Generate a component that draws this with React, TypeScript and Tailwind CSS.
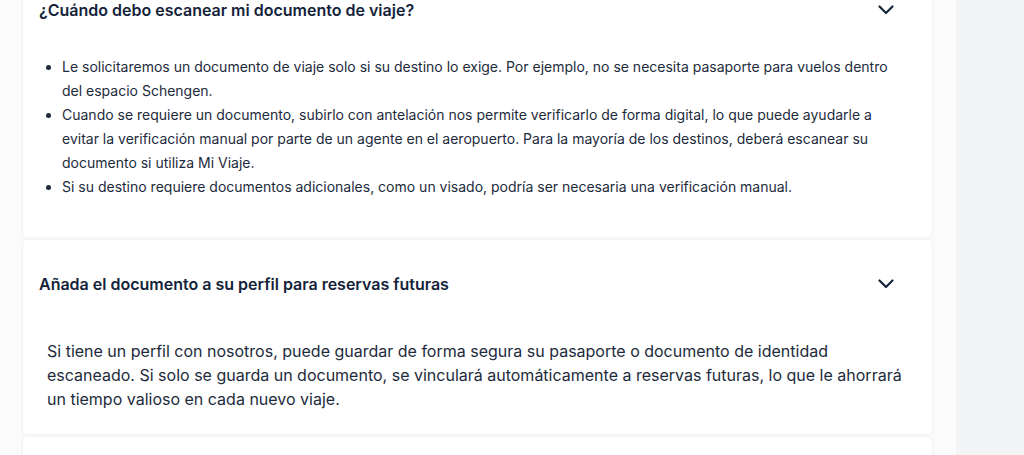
import { ReactNode } from "react"

interface FaqItemProps {
  title: string
  children: ReactNode
  className?: string
  bodyClassName?: string
}

function Chevron() {
  return (
    <svg width="16" height="10" viewBox="0 0 16 10" fill="none" className="shrink-0">
      <polyline points="1.5,1.5 8,8 14.5,1.5" stroke="#16263a" strokeWidth="2.2" strokeLinecap="round" strokeLinejoin="round" />
    </svg>
  )
}

function FaqItem({ title, children, className = "", bodyClassName = "" }: FaqItemProps) {
  return (
    <section className={`rounded-[4px] bg-white shadow-[0_0_2px_rgba(0,0,0,0.12)] ${className}`}>
      <button className="flex h-[88px] w-full items-center justify-between pl-4 pr-[38px] text-left">
        <h3 className="text-[16px] font-semibold text-[#14233a]">{title}</h3>
        <Chevron />
      </button>
      <div className={bodyClassName}>{children}</div>
    </section>
  )
}

export default function App() {
  return (
    <div className="flex h-[455px] w-[1024px] overflow-hidden font-['Inter',sans-serif] text-[#1d2b3c]">
      <main className="flex w-[956px] flex-col gap-[3px] bg-[#fbfbfb] pl-[23px] pr-[24px]">
        <FaqItem
          title="¿Cuándo debo escanear mi documento de viaje?"
          className="-mt-[34px]"
          bodyClassName="pt-[1px] pb-[38px] pr-6"
        >
          <ul className="list-disc pl-[39px] text-[14px] leading-[24px]">
            <li>
              Le solicitaremos un documento de viaje solo si su destino lo exige. Por ejemplo, no se necesita pasaporte para vuelos dentro del espacio Schengen.
            </li>
            <li>
              Cuando se requiere un documento, subirlo con antelación nos permite verificarlo de forma digital, lo que puede ayudarle a evitar la verificación manual por parte de un agente en el aeropuerto. Para la mayoría de los destinos, deberá escanear su documento si utiliza Mi Viaje.
            </li>
            <li>
              Si su destino requiere documentos adicionales, como un visado, podría ser necesaria una verificación manual.
            </li>
          </ul>
        </FaqItem>

        <FaqItem
          title="Añada el documento a su perfil para reservas futuras"
          bodyClassName="pl-6 pr-3 pt-[11px] pb-[23px]"
        >
          <p className="text-[16px] leading-[24px]">
            Si tiene un perfil con nosotros, puede guardar de forma segura su pasaporte o documento de identidad escaneado. Si solo se guarda un documento, se vinculará automáticamente a reservas futuras, lo que le ahorrará un tiempo valioso en cada nuevo viaje.
          </p>
        </FaqItem>

        <section className="h-[60px] shrink-0 rounded-[4px] bg-white shadow-[0_0_2px_rgba(0,0,0,0.12)]" />
      </main>
      <aside className="flex-1 bg-[#f3f4f6]" />
    </div>
  )
}
